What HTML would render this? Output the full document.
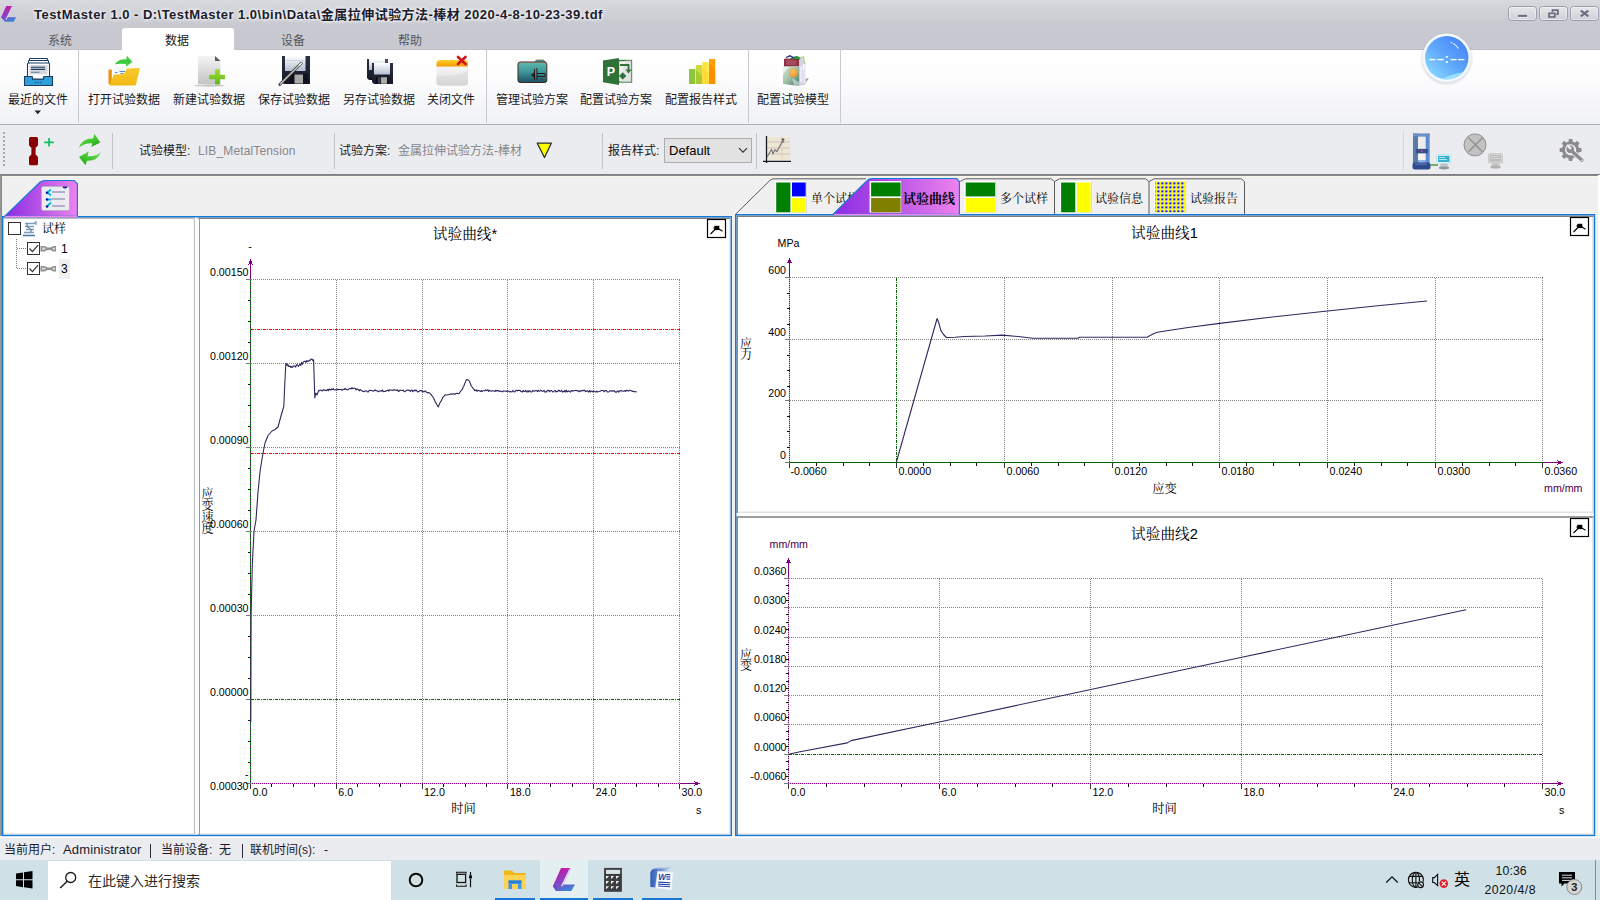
<!DOCTYPE html>
<html lang="zh-CN">
<head>
<meta charset="utf-8">
<title>TestMaster 1.0</title>
<style>
*{box-sizing:border-box;margin:0;padding:0}
html,body{width:1600px;height:900px;overflow:hidden;background:#fff}
body{position:relative;font-family:"Liberation Sans","Noto Sans CJK SC",sans-serif;font-size:12px;color:#1a1a1a;line-height:1}
.abs{position:absolute}
.t{position:absolute;white-space:nowrap;line-height:1}
svg{position:absolute;overflow:visible}
/* title bar */
#titlebar{left:0;top:0;width:1600px;height:50px;background:linear-gradient(#d8d9de 0px,#d0d1d7 12px,#c9cad1 24px,#c7c8d0 49px,#b9bac3 50px)}
#title{left:34px;top:7.5px;font-size:13px;font-weight:bold;color:#1b1b2b;letter-spacing:0.47px;text-shadow:0 0 3px #fff,0 0 5px #fff}
.wbtn{position:absolute;top:6px;width:28.500px;height:15px;border:1px solid #9b9dab;border-radius:3.500px;background:linear-gradient(#e6e7eb,#dadbe0 50%,#d0d1d8);box-shadow:inset 0 0 0 1px rgba(255,255,255,.45)}
.mtab{position:absolute;top:35px;font-size:12px;color:#55565c;width:60px;text-align:center;margin-left:-30px}
#acttab{left:122px;top:28px;width:112px;height:23px;background:#fff;border-radius:3px 3px 0 0}
/* ribbon */
#ribbon{left:0;top:50px;width:1600px;height:74px;background:linear-gradient(#ffffff 0,#fdfdfe 26px,#f0f1f5 74px)}
#ribbonline{left:0;top:123.500px;width:1600px;height:1.500px;background:linear-gradient(#c9cad0,#aeafb6 50%,#d2d3d8)}
.rsep{position:absolute;top:50px;width:1px;height:73px;background:#c9cad0}
.rlabel{position:absolute;top:94px;font-size:12px;color:#1a1a1a;white-space:nowrap;text-align:center;width:80px;margin-left:-40px;line-height:13px}
/* toolbar */
#toolbar{left:0;top:125px;width:1600px;height:49px;background:#ebecf0}
.tsep{position:absolute;top:133px;width:1px;height:36px;background:#c3c4c9}
.tl{position:absolute;top:145px;font-size:12px;white-space:nowrap;line-height:13px}
.grey{color:#85868a}
/* doc area */
#docarea{left:0;top:174px;width:1600px;height:664px;background:#f0f0f0}
/* status */
#status{left:0;top:838px;width:1600px;height:22px;background:#ebecf0}
#taskbar{left:0;top:860px;width:1600px;height:40px;background:#cfe1e7}
.sf{font-family:"Liberation Sans","Noto Serif CJK SC",serif}
.ct{font-family:"Liberation Sans","Noto Sans CJK SC",sans-serif}
</style>
</head>
<body>
<!-- ===== TITLE BAR ===== -->
<div id="titlebar" class="abs"></div>
<svg style="left:0;top:0" width="20" height="28" viewBox="0 0 20 28">
  <defs><linearGradient id="lg1" x1="0.300" y1="0" x2="0.700" y2="1"><stop offset="0" stop-color="#c6189f"/><stop offset="0.500" stop-color="#8e40c4"/><stop offset="1" stop-color="#3488da"/></linearGradient></defs>
  <path d="M6.250 6 L12.750 6 L7.400 17.250 L16 17.250 L13.750 21.750 L5 21.750 L1 17.500 Z" fill="url(#lg1)"/>
  <path d="M11.900 6.300 L12.800 6.300 L6.400 20 L5.600 19.500 Z" fill="#f6ecf9" opacity=".9"/>
</svg>
<div id="title" class="t">TestMaster 1.0 - D:\TestMaster 1.0\bin\Data\金属拉伸试验方法-棒材 2020-4-8-10-23-39.tdf</div>
<div class="wbtn" style="left:1508px"></div>
<div class="wbtn" style="left:1539.200px"></div>
<div class="wbtn" style="left:1570.200px"></div>
<svg style="left:1500px;top:0" width="100" height="28" viewBox="1500 0 100 28">
  <g fill="none" stroke="#f2f3f6" stroke-width="1.800" opacity=".8" transform="translate(0 1.100)">
    <path d="M1518 15.900H1527"/><path d="M1580.800 10.800 L1588.300 16.200 M1588.300 10.800 L1580.800 16.200"/>
  </g>
  <rect x="1518" y="14.900" width="9" height="2" fill="#6a6c80"/>
  <path d="M1552.500 12 V10.100 H1557.900 V14.200 H1556.200" fill="none" stroke="#6a6c80" stroke-width="1.700"/>
  <rect x="1549" y="13.300" width="5.800" height="3.700" fill="none" stroke="#6a6c80" stroke-width="1.700"/>
  <path d="M1580.800 10.600 L1588.300 16.400 M1588.300 10.600 L1580.800 16.400" stroke="#6a6c80" stroke-width="2.300" fill="none"/>
</svg>
<!-- menu tabs -->
<div id="acttab" class="abs"></div>
<div class="mtab" style="left:60px">系统</div>
<div class="mtab" style="left:177px;color:#1a1a1a">数据</div>
<div class="mtab" style="left:293px">设备</div>
<div class="mtab" style="left:410px">帮助</div>
<!-- ===== RIBBON ===== -->
<div id="ribbon" class="abs"></div>
<div id="ribbonline" class="abs"></div>
<div class="rsep" style="left:78px"></div>
<div class="rsep" style="left:486px"></div>
<div class="rsep" style="left:748px"></div>
<div class="rsep" style="left:840px"></div>
<div class="rlabel" style="left:38px">最近的文件</div>
<div class="rlabel" style="left:124px">打开试验数据</div>
<div class="rlabel" style="left:209px">新建试验数据</div>
<div class="rlabel" style="left:294px">保存试验数据</div>
<div class="rlabel" style="left:379px">另存试验数据</div>
<div class="rlabel" style="left:451px">关闭文件</div>
<div class="rlabel" style="left:532px">管理试验方案</div>
<div class="rlabel" style="left:616px">配置试验方案</div>
<div class="rlabel" style="left:701px">配置报告样式</div>
<div class="rlabel" style="left:793px">配置试验模型</div>
<svg style="left:34px;top:110px" width="8" height="5" viewBox="0 0 8 5"><path d="M0.500 0.500h6.500l-3.250 3.800z" fill="#222"/></svg>
<!-- ribbon icons: one big svg in page coordinates -->
<svg style="left:0;top:50px" width="860" height="45" viewBox="0 50 860 45">
  <defs>
    <linearGradient id="gdoc" x1="0" y1="0" x2="0" y2="1"><stop offset="0" stop-color="#f4f4f4"/><stop offset="1" stop-color="#c4c4c4"/></linearGradient>
    <linearGradient id="gplus" x1="0" y1="0" x2="0" y2="1"><stop offset="0" stop-color="#9be02e"/><stop offset="1" stop-color="#62b515"/></linearGradient>
    <linearGradient id="gfold" x1="0" y1="0" x2="0" y2="1"><stop offset="0" stop-color="#f7cb2a"/><stop offset="1" stop-color="#f1b816"/></linearGradient>
    <linearGradient id="glabel" x1="0" y1="0" x2="0" y2="1"><stop offset="0" stop-color="#ffffff"/><stop offset="1" stop-color="#b4bfd2"/></linearGradient>
    <linearGradient id="gnavy" x1="0" y1="0" x2="0" y2="1"><stop offset="0" stop-color="#2b3145"/><stop offset="1" stop-color="#151824"/></linearGradient>
    <linearGradient id="gwin" x1="0" y1="0" x2="0" y2="1"><stop offset="0" stop-color="#fbfbfb"/><stop offset="0.55" stop-color="#ededed"/><stop offset="1" stop-color="#cfcfcf"/></linearGradient>
    <linearGradient id="gorg" x1="0" y1="0" x2="0" y2="1"><stop offset="0" stop-color="#ffd02a"/><stop offset="1" stop-color="#f39a00"/></linearGradient>
    <linearGradient id="gteal" x1="0" y1="0" x2="0" y2="1"><stop offset="0" stop-color="#5fbab0"/><stop offset="0.45" stop-color="#3f9a9a"/><stop offset="1" stop-color="#1c4f68"/></linearGradient>
    <linearGradient id="gbag" x1="0" y1="0" x2="1" y2="1"><stop offset="0" stop-color="#d6e6d6"/><stop offset="0.5" stop-color="#9fc0a6"/><stop offset="1" stop-color="#3f7458"/></linearGradient>
    <linearGradient id="gside" x1="0" y1="0" x2="1" y2="0"><stop offset="0" stop-color="#c9c7e6"/><stop offset="1" stop-color="#f4f4fb"/></linearGradient>
    <radialGradient id="gball" cx="0.4" cy="0.35" r="0.7"><stop offset="0" stop-color="#f9c062"/><stop offset="1" stop-color="#ea952a"/></radialGradient>
  </defs>

  <!-- 1 recent files -->
  <g>
    <path d="M29.500 63 L29.500 58.500 L47.500 58.500 L47.500 63" fill="#fff" stroke="#1d3c63" stroke-width="1"/>
    <path d="M28.500 65 L28.500 60.500 L48.500 60.500 L48.500 65" fill="#fff" stroke="#1d3c63" stroke-width="1"/>
    <path d="M27.500 78 L27.500 64 Q27.500 63 28.500 63 L48.500 63 Q49.500 63 49.500 64 L49.500 78Z" fill="#fff" stroke="#1d3c63" stroke-width="1.100"/>
    <rect x="29.500" y="65" width="18" height="9.500" fill="#d3d8de"/>
    <path d="M31 67.300h14M31 69.400h14" stroke="#1d3c63" stroke-width="1.100"/>
    <path d="M31 72.300h8.500" stroke="#6f87a3" stroke-width="1.100"/>
    <path d="M24.500 76.500 L32.500 76.500 L32.500 79 L43.500 79 L43.500 76.500 L52.500 76.500 L52.500 85.500 L24.500 85.500Z" fill="#2f9fda" stroke="#1d3c63" stroke-width="1.100"/>
    <rect x="32.500" y="74.500" width="11" height="4.500" fill="#fff"/>
    <path d="M32.500 76.500V79H43.500V76.500" fill="none" stroke="#1d3c63" stroke-width="1.100"/>
    <path d="M35 82.500h1.200M37.600 82.500h1.200M40.200 82.500h1.200" stroke="#1d3c63" stroke-width="1"/>
  </g>

  <!-- 2 open folder -->
  <g>
    <path d="M108.500 70.500 Q108.500 69.500 109.500 69.500 L111.800 69.500 L111.800 84 L108.500 84Z" fill="#e8930c"/>
    <path d="M113.500 67.500 L127 66.500 L129 74.500 L114.500 76Z" fill="#f4f7fb"/>
    <path d="M115 72.500h2.500M119.500 71.500h6M120.500 73.500h3" stroke="#4a90d9" stroke-width="1"/>
    <path d="M114 74.500 L123.500 74.200 L127 68.400 L139 68 Q140 68 139.800 69 L136 84.500 Q135.700 85.500 134.700 85.500 L110.300 85.500 Q109 85.500 109.500 84.300Z" fill="url(#gfold)"/>
    <path d="M114.800 64.300 Q118 58.800 126.300 59.200 L126.800 55.800 L132.400 61.800 L125.800 66.800 L126.200 63.900 Q119.500 63.200 114.800 64.300Z" fill="#3ecb3e"/>
  </g>

  <!-- 3 new doc -->
  <g>
    <ellipse cx="209.500" cy="85.500" rx="15.500" ry="1.200" fill="#9a9a9a" opacity=".55"/>
    <path d="M198 56 L215 56 L220.500 61 L220.500 84 L198 84Z" fill="url(#gdoc)"/>
    <path d="M215 56 L220.500 61 L215 61Z" fill="#5a5a5a"/>
    <path d="M215 69.800 Q215 69.300 215.500 69.300 L219.300 69.300 Q219.800 69.300 219.800 69.800 L219.800 74.800 L224.500 74.800 Q225 74.800 225 75.300 L225 78.700 Q225 79.200 224.500 79.200 L219.800 79.200 L219.800 84 Q219.800 84.500 219.300 84.500 L215.500 84.500 Q215 84.500 215 84 L215 79.200 L209.700 79.200 Q209.200 79.200 209.200 78.700 L209.200 75.300 Q209.200 74.800 209.700 74.800 L215 74.800Z" fill="url(#gplus)"/>
  </g>

  <!-- 4 save -->
  <g>
    <path d="M282 56 L310 56 L310 84 L284 84 L282 82Z" fill="url(#gnavy)"/>
    <rect x="285" y="56" width="20.500" height="15" fill="url(#glabel)"/>
    <path d="M286 60.500h18.500" stroke="#c2cde0" stroke-width=".8"/>
    <rect x="290" y="74" width="18" height="10" fill="#10131d"/>
    <rect x="294.500" y="74.500" width="8.500" height="9" fill="#a9a9a9"/>
    <path d="M279.800 84.500 L301.200 63.200" stroke="#3c3c3c" stroke-width="2.800" stroke-linecap="round"/>
    <path d="M280.300 84 L300.300 64.200" stroke="#c4c4c4" stroke-width="1.400" stroke-linecap="round"/>
    <path d="M299 65.500 L301.800 62.800" stroke="#f5f5f5" stroke-width="1.500"/>
  </g>

  <!-- 5 save as -->
  <g>
    <path d="M367 59 L388 59 L388 80 L369 80 L367 78Z" fill="url(#gnavy)"/>
    <rect x="369" y="59" width="16" height="11" fill="url(#glabel)"/>
    <rect x="385.200" y="59.300" width="2.500" height="3.500" fill="#555b6e"/>
    <path d="M372 63 L393 63 L393 84 L374 84 L372 82Z" fill="url(#gnavy)"/>
    <rect x="374" y="63" width="16" height="11.500" fill="url(#glabel)"/>
    <rect x="376.200" y="76.800" width="11.600" height="7.200" fill="#0d1019"/>
    <rect x="381" y="77.200" width="6" height="6.500" fill="#a9a9a9"/>
    <rect x="378" y="77.200" width="2.400" height="6.500" fill="#3d4152"/>
  </g>

  <!-- 6 close file -->
  <g>
    <rect x="436.500" y="60" width="31.500" height="25.500" rx="3.500" fill="url(#gwin)"/>
    <path d="M436.500 66.500 L436.500 63.500 Q436.500 60 440 60 L464.500 60 Q468 60 468 63.500 L468 66.500Z" fill="url(#gorg)"/>
    <path d="M437 76 Q455 76.500 468 71 L468 82 Q468 85.500 464.500 85.500 L440 85.500 Q436.500 85.500 436.500 82Z" fill="#d9d9d9" opacity=".55"/>
    <path d="M458 57 L465.500 64 M465.500 57 L458 64" stroke="#d0111b" stroke-width="2.600" stroke-linecap="round"/>
  </g>

  <!-- 7 manage -->
  <g>
    <path d="M535 62.500 L535.800 60.600 Q536 60 536.800 60 L543 60 Q543.700 60 544.200 60.600 L546 62.800Z" fill="#4fb0ad" stroke="#5a3a2a" stroke-width=".6"/>
    <rect x="518" y="62" width="28.800" height="20.500" rx="2.200" fill="url(#gteal)" stroke="#3d281d" stroke-width="1"/>
    <path d="M518.500 64.500 Q518.500 62.500 520.500 62.500 L544.500 62.500 Q546.500 62.500 546.500 64.500" fill="none" stroke="#8a6a55" stroke-width="1"/>
    <g stroke="#2a1a14" stroke-width="1" fill="none">
      <path d="M534.500 69v11M537 70v10M537 73.500h8v3h-8"/>
      <path d="M531.500 75l3-2.500v5z" fill="#2a1a14"/>
      <path d="M536 68l1.500 2M541 78.500l1.500 1.500"/>
    </g>
  </g>

  <!-- 8 config plan (project) -->
  <g>
    <rect x="618.500" y="60.500" width="13" height="21.500" fill="#f1f1f1" stroke="#2e7237" stroke-width="1.300"/>
    <path d="M625.500 60.500 L631.500 60.500 L631.500 82 L620 82Z" fill="#dcdcdc" opacity=".7"/>
    <path d="M620 65 L628.500 65 L628.500 70" fill="none" stroke="#2e7237" stroke-width="1.800"/>
    <path d="M625.500 69.500 L631.500 69.500 L628.500 73.500Z" fill="#2e7237"/>
    <path d="M622.700 72.200 L626.400 75.900 L622.700 79.600 L619 75.900Z" fill="#2e7237"/>
    <path d="M603 60.500 L619 58 L619 85 L603 82.200Z" fill="#2e7237"/>
    <text x="611" y="76" text-anchor="middle" font-family="Liberation Sans,sans-serif" font-weight="bold" font-size="12.500" fill="#ffffff">P</text>
  </g>

  <!-- 9 report style bars -->
  <g>
    <rect x="689" y="69" width="6.200" height="15" rx=".6" fill="#8cc63f"/>
    <rect x="695.800" y="65" width="6.400" height="19" rx=".6" fill="#cbdb3c"/>
    <path d="M695.800 70 L702.200 76 L702.200 84 L695.800 84Z" fill="#a3c332" opacity=".8"/>
    <rect x="702.300" y="62" width="6.400" height="22" rx=".6" fill="#ffe53b"/>
    <path d="M702.300 67 L708.700 73 L708.700 84 L702.300 84Z" fill="#fdd835" opacity=".8"/>
    <rect x="709" y="59" width="6.200" height="25" rx=".6" fill="#ffa000"/>
    <path d="M709 63.500 L715.200 69.500 L715.200 84 L709 84Z" fill="#fb8c00" opacity=".8"/>
  </g>

  <!-- 10 config model (bag) -->
  <g>
    <rect x="778.500" y="56" width="31" height="30.500" fill="#ffffff"/>
    <path d="M803 79 L809 78 L804.500 84.500 L800 85.500Z" fill="#8d8d8d" opacity=".8"/>
    <path d="M799 67 L804.500 60.500 L806.500 62 L805.500 83 L799 86Z" fill="url(#gside)"/>
    <path d="M801 66v16M803.500 64v5" stroke="#fff" stroke-width="1.200" opacity=".9"/>
    <path d="M790 58.500 L793 56.800 L797 56 L800.500 57.500 L800.500 66 L790 66Z" fill="#2f8f3a"/>
    <path d="M799 60 L802 57.800 L803.500 60 L803 66 L799 67Z" fill="#d5d3ea"/>
    <path d="M786 57.500 L790 55.800 L794 58" fill="none" stroke="#1d2a8a" stroke-width="1.300"/>
    <path d="M799.500 58 L803.500 57 L804.500 64" fill="none" stroke="#b9d09a" stroke-width="1.500"/>
    <path d="M784 59.500 Q784 58.500 785.500 58.500 L797.500 59 Q799 59 799 60.500 L799 66.500 L784 66.500Z" fill="#8e2f42"/>
    <path d="M786 60 L796.500 60.300 L796.500 65 L786 65Z" fill="#b0566a" opacity=".7"/>
    <path d="M783 66.500 L799 66.500 L799 86 L783 84Z" fill="url(#gbag)"/>
    <path d="M783 67 L789 67 L783 74Z" fill="#f2f6f2" opacity=".8"/>
    <circle cx="793.500" cy="72.800" r="4.400" fill="url(#gball)"/>
    <path d="M792 78 L799 82 L799 86 L794 85.400Z" fill="#e4e4f2" opacity=".6"/>
  </g>
</svg>

<!-- blue clock circle -->
<svg style="left:1421px;top:32px" width="52" height="54" viewBox="0 0 52 54">
  <defs><linearGradient id="clk" x1="0.880" y1="0.150" x2="0.150" y2="0.880"><stop offset="0" stop-color="#4687f7"/><stop offset="0.500" stop-color="#5ea6fb"/><stop offset="1" stop-color="#84d3ff"/></linearGradient>
  <radialGradient id="clks" cx="0.5" cy="0.5" r="0.5"><stop offset="0.860" stop-color="#9aa3b5" stop-opacity=".35"/><stop offset="1" stop-color="#9aa3b5" stop-opacity="0"/></radialGradient>
  <clipPath id="clkc"><circle cx="25.800" cy="25.800" r="21.700"/></clipPath></defs>
  <circle cx="25.800" cy="27" r="27" fill="url(#clks)"/>
  <circle cx="25.800" cy="25.800" r="24.300" fill="#f4f9fd"/>
  <circle cx="25.800" cy="25.800" r="21.700" fill="url(#clk)"/>
  <path d="M18 49 Q30 41 46 40 L46 52 L18 52Z" fill="#a4e6ff" opacity=".85" clip-path="url(#clkc)"/>
  <path d="M30.200 10.300 L31 11 M32.500 11.800 Q35.500 13.500 37.300 16.200" stroke="#e3f2ff" stroke-width="1.100" fill="none" stroke-linecap="round"/>
  <text x="26.400" y="30.900" text-anchor="middle" font-family="Liberation Sans,sans-serif" font-weight="bold" font-size="12" fill="#ffffff" letter-spacing="1.2">––:––</text>
</svg>
<!-- ===== TOOLBAR ===== -->
<div id="toolbar" class="abs"></div>
<svg style="left:3px;top:132px" width="3" height="36" viewBox="0 0 3 36" shape-rendering="crispEdges"><path d="M1 0v35" stroke="#a6a7ab" stroke-width="2" stroke-dasharray="2 2"/></svg>
<!-- specimen + -->
<svg style="left:28px;top:136px" width="28" height="30" viewBox="28 136 28 30">
  <path d="M29 138.500 Q29 137 30.500 137 L36.500 137 Q38 137 38 138.500 L38 144.500 Q38 145.500 37.200 146.200 L35.600 147.800 L35.600 154.400 L37.200 156 Q38 156.700 38 157.700 L38 163.700 Q38 165.200 36.500 165.200 L30.500 165.200 Q29 165.200 29 163.700 L29 157.700 Q29 156.700 29.800 156 L31.400 154.400 L31.400 147.800 L29.800 146.200 Q29 145.500 29 144.500Z" fill="#8b0000"/>
  <path d="M49 138v8.600M44.200 142.300h9.600" stroke="#0fc062" stroke-width="1.700" fill="none"/>
</svg>
<!-- refresh -->
<svg style="left:76px;top:130px" width="28" height="38" viewBox="76 130 28 38">
  <defs><linearGradient id="gr1" x1="0" y1="0" x2="1" y2="1"><stop offset="0" stop-color="#6fe052"/><stop offset="0.600" stop-color="#3cc42a"/><stop offset="1" stop-color="#1f8f16"/></linearGradient>
  <linearGradient id="gr2" x1="1" y1="0" x2="0" y2="1"><stop offset="0" stop-color="#6fe052"/><stop offset="0.600" stop-color="#3cc42a"/><stop offset="1" stop-color="#239a1a"/></linearGradient></defs>
  <path d="M79 147.600 Q82.500 138.300 93 138.600 L94.500 134 L100.300 142.400 L91.300 147 L92.300 143.200 Q84.500 142.800 79 147.600Z" fill="url(#gr1)"/>
  <path d="M101 152 Q97.500 161.200 87 160.800 L85.500 165.200 L79 157 L88.600 151.600 L87.600 156.200 Q95.500 157 101 152Z" fill="url(#gr2)"/>
</svg>
<div class="tsep" style="left:112px"></div>
<div class="tl" style="left:139px">试验模型:</div>
<div class="tl grey" style="left:198px;letter-spacing:0.14px">LIB_MetalTension</div>
<div class="tsep" style="left:334px"></div>
<div class="tl" style="left:339px">试验方案:</div>
<div class="tl grey" style="left:398px">金属拉伸试验方法-棒材</div>
<svg style="left:536px;top:142px" width="17" height="17" viewBox="0 0 17 17"><path d="M1.300 1.200 L15.300 1.200 L8.500 15.500Z" fill="#ffff00" stroke="#2b2b2b" stroke-width="1.300" stroke-linejoin="round"/></svg>
<div class="tsep" style="left:602px"></div>
<div class="tl" style="left:608px">报告样式:</div>
<div class="abs" style="left:664px;top:138px;width:88px;height:25px;background:#e2e2e3;border:1px solid #adadad"></div>
<div class="t" style="left:669px;top:144px;font-size:13px;color:#000">Default</div>
<svg style="left:738px;top:147px" width="10" height="7" viewBox="0 0 10 7"><path d="M1 1.200l4 4 4-4" stroke="#333" stroke-width="1.200" fill="none"/></svg>
<div class="tsep" style="left:756px"></div>
<!-- chart icon -->
<svg style="left:763px;top:136px" width="29" height="27" viewBox="0 0 29 27">
  <rect x="3" y="1" width="24" height="23" fill="#ede8d6"/>
  <path d="M3 6h24M3 12h24M3 18h24" stroke="#dccbc4" stroke-width="1.300"/>
  <path d="M19 1v22" stroke="#e3d3c4" stroke-width="1.500"/>
  <path d="M3.500 0v27M0 25.300h28" stroke="#1a1a1a" stroke-width="1.300" fill="none"/>
  <path d="M4 21 L8.500 13.500 L10 17.500 L12 14 L14 15.500 L19.500 5 L21 6.500" stroke="#777" stroke-width="1.200" fill="none"/>
  <path d="M18.500 3.500h3M20 2v3.500" stroke="#555" stroke-width="1"/>
</svg>
<div class="tsep" style="left:1403px;top:131px;height:40px;background:#d6d7db"></div>
<svg style="left:1400px;top:128px" width="200" height="46" viewBox="1400 128 200 46">
  <!-- testing machine -->
  <g>
    <rect x="1413" y="133.600" width="16.500" height="30" fill="#8fb4e6"/>
    <rect x="1413" y="133.600" width="5" height="30" fill="#5a78a8"/>
    <rect x="1425.500" y="133.600" width="4" height="30" fill="#5d8bd0"/>
    <rect x="1413" y="133.600" width="16.500" height="2.800" fill="#6f8fc0"/>
    <rect x="1418" y="136.800" width="7.600" height="11.800" fill="#ececec"/>
    <rect x="1416" y="149" width="12" height="4.300" fill="#3a4f86"/>
    <rect x="1420.500" y="150" width="2.500" height="2" fill="#7a4fa0"/>
    <rect x="1418" y="153.600" width="7.600" height="6.400" fill="#f2f2f2"/>
    <rect x="1412.500" y="162.400" width="18" height="7" rx="2.500" fill="#2c4a8c"/>
    <rect x="1415" y="163.200" width="12" height="2" fill="#4a6ab0"/>
    <path d="M1430.500 165H1438" stroke="#2a8a2a" stroke-width="1.300"/>
    <rect x="1436.500" y="154.300" width="14.500" height="9.300" rx="1" fill="#e9f6fb" stroke="#b7dfea" stroke-width=".8"/>
    <rect x="1438" y="155.800" width="11.500" height="6.200" fill="#35b0d0"/>
    <path d="M1439 157.500h6M1439 159.500h8" stroke="#bfeaf5" stroke-width=".9"/>
    <path d="M1441 163.600h6l1.500 3h-9z" fill="#b9c3c9"/>
    <ellipse cx="1444" cy="167.800" rx="5.200" ry="1.600" fill="#8d979d"/>
  </g>
  <!-- grey X -->
  <circle cx="1475" cy="144.900" r="11" fill="#c2c2c2" stroke="#8f8f8f" stroke-width="1"/>
  <path d="M1468.500 137.800 L1482.500 151.800 M1482.500 137.800 L1468.500 151.800" stroke="#8f8f8f" stroke-width="1.300"/>
  <!-- grey computer -->
  <g>
    <rect x="1488.500" y="153.600" width="14" height="9.400" rx="1" fill="#d6d6d6" stroke="#c4c4c4" stroke-width=".8"/>
    <rect x="1490" y="155" width="11" height="6.500" fill="#bdbdbd"/>
    <path d="M1491 156.500h7M1491 158.500h9" stroke="#d9d9d9" stroke-width=".9"/>
    <path d="M1492.500 163h6l1.500 3h-9z" fill="#c6c6c6"/>
    <ellipse cx="1495.500" cy="167" rx="5.200" ry="1.500" fill="#b0b0b0"/>
  </g>
  <!-- gear + wrench -->
  <g>
    <g fill="#8b8b8b">
      <circle cx="1570.600" cy="149.900" r="8.600"/>
      <g>
        <rect x="1568.600" y="138.900" width="4" height="22" rx=".8"/>
        <rect x="1568.600" y="138.900" width="4" height="22" rx=".8" transform="rotate(45 1570.600 149.900)"/>
        <rect x="1568.600" y="138.900" width="4" height="22" rx=".8" transform="rotate(90 1570.600 149.900)"/>
        <rect x="1568.600" y="138.900" width="4" height="22" rx=".8" transform="rotate(135 1570.600 149.900)"/>
      </g>
    </g>
    <circle cx="1570.600" cy="149.900" r="5.600" fill="#ebecf0"/>
    <path d="M1571 150.300 L1582.300 160.600" stroke="#ebecf0" stroke-width="5.200" stroke-linecap="round"/>
    <path d="M1571.500 150.800 L1582 160.300" stroke="#8b8b8b" stroke-width="3.200" stroke-linecap="round"/>
    <circle cx="1570.200" cy="149.300" r="3.700" fill="#8b8b8b"/>
    <path d="M1567 144.800 L1571 148.800" stroke="#ebecf0" stroke-width="2.600"/>
    <circle cx="1582" cy="160.400" r=".8" fill="#ebecf0"/>
  </g>
</svg>

<!-- ===== DOC AREA ===== -->
<div id="docarea" class="abs"></div>
<div class="abs" style="left:0;top:173.500px;width:1600px;height:2.500px;background:linear-gradient(#8f8f93,#6f6f73 55%,#a9a9ac)"></div>
<div class="abs" style="left:0;top:176px;width:1600px;height:1px;background:#fbf7e4"></div>
<div class="abs" style="left:0;top:176px;width:2px;height:661px;background:linear-gradient(90deg,#a3a3a3,#7d7d7d)"></div>
<div class="abs" style="left:1598px;top:175px;width:2px;height:663px;background:#fff"></div>
<div class="abs" style="left:0;top:836px;width:1600px;height:2px;background:#fff"></div>
<!-- frames -->
<div class="abs" style="left:3px;top:217px;width:192px;height:618px;background:#fff"></div>
<div class="abs" style="left:198px;top:217px;width:533px;height:618px;background:#fff"></div>
<div class="abs" style="left:736px;top:215px;width:858px;height:620px;background:#fff"></div>
<svg style="left:0;top:0" width="1600" height="900" viewBox="0 0 1600 900">
  <!-- sunken grey borders -->
  <g fill="none" stroke="#7f7f7f" stroke-width="1.500">
    <path d="M3.400 218 H194.300" stroke-width="1.200"/>
    <path d="M199.050 835 V218.150 H730"/>
    <path d="M737.150 513 V216.150 H1593.500"/>
    <path d="M737.150 835 V516.900 H1593.500"/>
  </g>
  <g fill="none" stroke="#e2e2e2" stroke-width="1.500">
    <path d="M3.400 834 H193.600"/><path d="M194.400 218.600 V834.600" stroke="#b0b0b0" stroke-width="0.900"/>
    <path d="M199.800 834 H729.900 V219"/>
    <path d="M738 512.200 H1593 V217"/>
    <path d="M738 834 H1593 V517.700"/>
  </g>
  <!-- blue frames -->
  <rect x="2.700" y="216.700" width="728.600" height="618.800" fill="none" stroke="#1479d7" stroke-width="1.400"/>
  <rect x="735.700" y="214.700" width="858.800" height="620.800" fill="none" stroke="#1479d7" stroke-width="1.400"/>
</svg>
<div class="abs" style="left:194.800px;top:218.800px;width:3.800px;height:615.500px;background:#fcfcfc"></div>

<!-- left tab (tree) -->
<svg style="left:0;top:176px" width="200" height="42" viewBox="0 0 200 42">
  <defs><linearGradient id="tabg" x1="0" y1="0" x2="1" y2="0"><stop offset="0" stop-color="#8a2be2"/><stop offset="0.450" stop-color="#b452e6"/><stop offset="1" stop-color="#ee82ee"/></linearGradient></defs>
  <path d="M4.500 40.400 L40 6.300 Q42 4.500 45 4.500 L74 4.500 L77.400 7.800 L77.400 40.400 Z" fill="url(#tabg)" stroke="#1479d7" stroke-width="1.200"/>
  <rect x="5.300" y="39.900" width="72.100" height="1.400" fill="#ee82ee"/>
  <rect x="41.500" y="10.500" width="28" height="24" rx="2" fill="#ebebf1" stroke="#b9b0c4" stroke-width="1"/>
  <path d="M52 16h13M52 23h13M52 30h13" stroke="#9d9db8" stroke-width="1.500"/>
  <path d="M51 13.500l-3.500 3 3.500 3M47.500 23.500h4M51 26.500l-3.500 3.500" stroke="#00b7e8" stroke-width="1.800" fill="none"/>
  <circle cx="47" cy="16.800" r="1.300" fill="#1111aa"/><circle cx="47" cy="23.500" r="1.300" fill="#1111aa"/><circle cx="47" cy="30.500" r="1.300" fill="#1111aa"/>
  <path d="M62.500 10.500h5a2.500 2 0 0 1-5 0z" fill="#1a1a9a"/>
</svg>

<!-- tree -->
<svg style="left:0;top:218px" width="195" height="70" viewBox="0 0 195 70">
  <rect x="8.500" y="4.500" width="12" height="12" fill="#fff" stroke="#333" stroke-width="1"/>
  <g shape-rendering="crispEdges" stroke="#7a7a7a" stroke-width="1" stroke-dasharray="1 1" fill="none"><path d="M16.500 21v30"/><path d="M17 30.500h10"/><path d="M17 50.500h10"/></g>
  <rect x="27.500" y="24.500" width="12" height="12" fill="#fff" stroke="#333" stroke-width="1"/>
  <rect x="27.500" y="44.500" width="12" height="12" fill="#fff" stroke="#333" stroke-width="1"/>
  <path d="M29.500 30.500l3 3.200 5.500-6.500" stroke="#333" stroke-width="1.200" fill="none"/>
  <path d="M29.500 50.500l3 3.200 5.500-6.500" stroke="#333" stroke-width="1.200" fill="none"/>
  <!-- root icon -->
  <g>
    <path d="M25 5.500h9l2-1.500v3M25 8.500h9M26 11.500h8M24 14.500h10" stroke="#7f9fb8" stroke-width="1.400" fill="none"/>
    <path d="M27 5v3.500l4 3v3" stroke="#5b86a6" stroke-width="1.200" fill="none"/>
    <path d="M23 17.500h12" stroke="#4e7da6" stroke-width="1.600"/>
  </g>
  <!-- specimen icons -->
  <g fill="#8f8f8f">
    <path d="M40.500 28h4l3 1.500h3l3-1.500h2.500v5.500h-2.500l-3-1.500h-3l-3 1.500h-4z"/>
    <path d="M40.500 48h4l3 1.500h3l3-1.500h2.500v5.500h-2.500l-3-1.500h-3l-3 1.500h-4z"/>
  </g>
  <g fill="#d6d6d6"><path d="M42 29.500h2.500l1.500 1-1.500 1.300H42zM52 30.500l2-1h1v2.500h-1z"/><path d="M42 49.500h2.500l1.500 1-1.500 1.300H42zM52 50.500l2-1h1v2.500h-1z"/></g>
</svg>
<div class="abs" style="left:59px;top:259px;width:11px;height:20px;background:#f0f0f0"></div>
<div class="t sf" style="left:42px;top:222px;font-size:12px;line-height:14px;color:#000">试样</div>
<div class="t" style="left:61px;top:242px;font-size:12px;line-height:14px;color:#000">1</div>
<div class="t" style="left:61px;top:262px;font-size:12px;line-height:14px;color:#000">3</div>
<!-- ===== RIGHT TABS ===== -->
<div class="t sf" style="left:811px;top:192px;font-size:12px;line-height:14px;color:#000">单个试样</div>
<svg style="left:730px;top:176px" width="520" height="42" viewBox="0 0 520 42">
  <defs>
    <pattern id="dots" x="426.400" y="5.400" width="4" height="4" patternUnits="userSpaceOnUse"><rect x="1.100" y="0" width="1.800" height="4" fill="#ffffff" opacity=".9"/><circle cx="2" cy="2" r="1.150" fill="#0000ff"/></pattern>
  </defs>
  <!-- tab 1 outline (inactive) -->
  <path d="M5.500 38.300 L40 4.300 Q41.800 2.800 44 2.800 L136 2.800" fill="none" stroke="#5c5c5c" stroke-width="1"/>
  <!-- inactive tabs 3..5 -->
  <path d="M230.300 5.400 L235.300 2.800 L321.300 2.800 L324.500 5.600 L324.500 38" fill="none" stroke="#5c5c5c" stroke-width="1"/>
  <path d="M324.500 5.600 L329.500 2.800 L415.800 2.800 L419 5.600 L419 38" fill="none" stroke="#5c5c5c" stroke-width="1"/>
  <path d="M419 5.600 L424 2.800 L511.300 2.800 L514.500 5.600 L514.500 38" fill="none" stroke="#5c5c5c" stroke-width="1"/>
  <rect x="45.0" y="5.500" width="31.800" height="31.400" fill="#b9b9b9" opacity=".55"/>
  <rect x="44.7" y="5.100" width="31.400" height="31.300" fill="#ffffff"/>
  <rect x="46.2" y="6.500" width="14.200" height="29.700" fill="#008000"/>
  <rect x="62.0" y="6.500" width="13.700" height="13.900" fill="#0000ff"/>
  <rect x="62.0" y="22" width="13.700" height="14.200" fill="#ffff00"/>
  <!-- active tab -->
  <path d="M103 38.400 L137 4.600 Q139 2.500 142 2.500 L226.500 2.500 L229.400 5.500 L229.400 38.400 Z" fill="url(#tabg)" stroke="#1479d7" stroke-width="1.200"/>
  <rect x="104" y="37.900" width="125.400" height="1.300" fill="#ee82ee"/>
  <rect x="139.9" y="5.500" width="31.800" height="31.400" fill="#b9b9b9" opacity=".55"/>
  <rect x="139.6" y="5.100" width="31.400" height="31.300" fill="#ffffff"/>
  <rect x="141.1" y="6.500" width="29.5" height="13.900" fill="#008000"/>
  <rect x="141.1" y="22" width="29.5" height="14.200" fill="#808000"/>
  <rect x="234.5" y="5.500" width="31.800" height="31.400" fill="#b9b9b9" opacity=".55"/>
  <rect x="234.2" y="5.100" width="31.400" height="31.300" fill="#ffffff"/>
  <rect x="235.7" y="6.500" width="29.5" height="13.900" fill="#008000"/>
  <rect x="235.7" y="22" width="29.5" height="14.200" fill="#ffff00"/>
  <rect x="329.9" y="5.500" width="31.800" height="31.400" fill="#b9b9b9" opacity=".55"/>
  <rect x="329.6" y="5.100" width="31.400" height="31.300" fill="#ffffff"/>
  <rect x="331.1" y="6.500" width="14.200" height="29.700" fill="#008000"/>
  <rect x="346.9" y="6.500" width="13.700" height="29.700" fill="#ffff00"/>
  <rect x="424.300" y="5" width="31.800" height="31.800" fill="#b9b9b9" opacity=".5"/>
  <rect x="424" y="4.600" width="31.600" height="31.800" fill="#ffffff"/>
  <rect x="425" y="5.300" width="30.200" height="31" fill="#ffff00"/>
  <rect x="425" y="5.300" width="30.200" height="31" fill="url(#dots)"/>
</svg>
<div class="t sf" style="left:903px;top:192px;font-size:13px;line-height:14px;color:#000;font-weight:bold">试验曲线</div>
<div class="t sf" style="left:1000px;top:192px;font-size:12px;line-height:14px;color:#000">多个试样</div>
<div class="t sf" style="left:1095px;top:192px;font-size:12px;line-height:14px;color:#000">试验信息</div>
<div class="t sf" style="left:1190px;top:192px;font-size:12px;line-height:14px;color:#000">试验报告</div>

<svg class="chart" style="left:0;top:0" width="1600" height="900" viewBox="0 0 1600 900" shape-rendering="crispEdges">
<path d="M336.3 279.5V783.5" stroke="#828282" stroke-width="1" stroke-dasharray="1 1" fill="none"/>
<path d="M422.1 279.5V783.5" stroke="#828282" stroke-width="1" stroke-dasharray="1 1" fill="none"/>
<path d="M507.9 279.5V783.5" stroke="#828282" stroke-width="1" stroke-dasharray="1 1" fill="none"/>
<path d="M593.7 279.5V783.5" stroke="#828282" stroke-width="1" stroke-dasharray="1 1" fill="none"/>
<path d="M679.5 279.5V783.5" stroke="#828282" stroke-width="1" stroke-dasharray="1 1" fill="none"/>
<path d="M250.5 279.5H679.5" stroke="#828282" stroke-width="1" stroke-dasharray="1 1" fill="none"/>
<path d="M250.5 363.5H679.5" stroke="#828282" stroke-width="1" stroke-dasharray="1 1" fill="none"/>
<path d="M250.5 447.5H679.5" stroke="#828282" stroke-width="1" stroke-dasharray="1 1" fill="none"/>
<path d="M250.5 531.5H679.5" stroke="#828282" stroke-width="1" stroke-dasharray="1 1" fill="none"/>
<path d="M250.5 615.5H679.5" stroke="#828282" stroke-width="1" stroke-dasharray="1 1" fill="none"/>
<path d="M250.5 699.5H679.5" stroke="#828282" stroke-width="1" stroke-dasharray="1 1" fill="none"/>
<path d="M250.5 783.5H699" stroke="#800080" stroke-width="1" fill="none"/>
<path d="M250.5 260V783.5" stroke="#800080" stroke-width="1" fill="none"/>
<path d="M250.5 783.5H679.5" stroke="#c8b4c8" stroke-width="1" stroke-dasharray="1 1" fill="none"/>
<path d="M250.5 279.5V783.5" stroke="#c8b4c8" stroke-width="1" stroke-dasharray="1 1" fill="none"/>
<path d="M700 783.5l-6 -2.500 1.500 2.500 -1.500 2.500z" fill="#800080"/>
<path d="M250.5 259l-2.500 6 2.500 -1.500 2.500 1.500z" fill="#800080"/>
<path d="M250.5 783.5V788.5" stroke="#333" stroke-width="1" fill="none"/>
<path d="M271.95 783.5V786.5" stroke="#111" stroke-width="1" fill="none"/>
<path d="M293.4 783.5V786.5" stroke="#111" stroke-width="1" fill="none"/>
<path d="M314.85 783.5V786.5" stroke="#111" stroke-width="1" fill="none"/>
<path d="M336.3 783.5V788.5" stroke="#333" stroke-width="1" fill="none"/>
<path d="M357.75 783.5V786.5" stroke="#111" stroke-width="1" fill="none"/>
<path d="M379.2 783.5V786.5" stroke="#111" stroke-width="1" fill="none"/>
<path d="M400.65 783.5V786.5" stroke="#111" stroke-width="1" fill="none"/>
<path d="M422.1 783.5V788.5" stroke="#333" stroke-width="1" fill="none"/>
<path d="M443.55 783.5V786.5" stroke="#111" stroke-width="1" fill="none"/>
<path d="M465 783.5V786.5" stroke="#111" stroke-width="1" fill="none"/>
<path d="M486.45 783.5V786.5" stroke="#111" stroke-width="1" fill="none"/>
<path d="M507.9 783.5V788.5" stroke="#333" stroke-width="1" fill="none"/>
<path d="M529.35 783.5V786.5" stroke="#111" stroke-width="1" fill="none"/>
<path d="M550.8 783.5V786.5" stroke="#111" stroke-width="1" fill="none"/>
<path d="M572.25 783.5V786.5" stroke="#111" stroke-width="1" fill="none"/>
<path d="M593.7 783.5V788.5" stroke="#333" stroke-width="1" fill="none"/>
<path d="M615.15 783.5V786.5" stroke="#111" stroke-width="1" fill="none"/>
<path d="M636.6 783.5V786.5" stroke="#111" stroke-width="1" fill="none"/>
<path d="M658.05 783.5V786.5" stroke="#111" stroke-width="1" fill="none"/>
<path d="M679.5 783.5V788.5" stroke="#333" stroke-width="1" fill="none"/>
<path d="M245.5 279.5H250.5" stroke="#777" stroke-width="1" fill="none"/>
<path d="M247.5 300.5H250.5" stroke="#111" stroke-width="1" fill="none"/>
<path d="M247.5 321.5H250.5" stroke="#111" stroke-width="1" fill="none"/>
<path d="M247.5 342.5H250.5" stroke="#111" stroke-width="1" fill="none"/>
<path d="M245.5 363.5H250.5" stroke="#777" stroke-width="1" fill="none"/>
<path d="M247.5 384.5H250.5" stroke="#111" stroke-width="1" fill="none"/>
<path d="M247.5 405.5H250.5" stroke="#111" stroke-width="1" fill="none"/>
<path d="M247.5 426.5H250.5" stroke="#111" stroke-width="1" fill="none"/>
<path d="M245.5 447.5H250.5" stroke="#777" stroke-width="1" fill="none"/>
<path d="M247.5 468.5H250.5" stroke="#111" stroke-width="1" fill="none"/>
<path d="M247.5 489.5H250.5" stroke="#111" stroke-width="1" fill="none"/>
<path d="M247.5 510.5H250.5" stroke="#111" stroke-width="1" fill="none"/>
<path d="M245.5 531.5H250.5" stroke="#777" stroke-width="1" fill="none"/>
<path d="M247.5 552.5H250.5" stroke="#111" stroke-width="1" fill="none"/>
<path d="M247.5 573.5H250.5" stroke="#111" stroke-width="1" fill="none"/>
<path d="M247.5 594.5H250.5" stroke="#111" stroke-width="1" fill="none"/>
<path d="M245.5 615.5H250.5" stroke="#777" stroke-width="1" fill="none"/>
<path d="M247.5 636.5H250.5" stroke="#111" stroke-width="1" fill="none"/>
<path d="M247.5 657.5H250.5" stroke="#111" stroke-width="1" fill="none"/>
<path d="M247.5 678.5H250.5" stroke="#111" stroke-width="1" fill="none"/>
<path d="M245.5 699.5H250.5" stroke="#777" stroke-width="1" fill="none"/>
<path d="M247.5 720.5H250.5" stroke="#111" stroke-width="1" fill="none"/>
<path d="M247.5 741.5H250.5" stroke="#111" stroke-width="1" fill="none"/>
<path d="M247.5 762.5H250.5" stroke="#111" stroke-width="1" fill="none"/>
<path d="M245.5 783.5H250.5" stroke="#777" stroke-width="1" fill="none"/>
<path d="M250.5 329.5H679.5" stroke="#ff0000" stroke-width="1" stroke-dasharray="3 1 1 1" fill="none"/>
<path d="M250.5 453.5H679.5" stroke="#ff0000" stroke-width="1" stroke-dasharray="3 1 1 1" fill="none"/>
<path d="M250.5 699.5H679.5" stroke="#006400" stroke-width="1" stroke-dasharray="3 1 1 1" fill="none"/>
<path d="M250.5 279.5V783.5" stroke="#008000" stroke-width="1" stroke-dasharray="3 1 1 1" fill="none"/>
</svg>
<svg class="chart" style="left:0;top:0" width="1600" height="900" viewBox="0 0 1600 900">
<path d="M250.8 722 L250.9 690 L251.1 615 L252.3 565 L254 531 L256 520 L258 492 L260 472 L262.8 454 L265 443 L268 435.5 L272 431 L275 429.5 L278 427 L281 416 L283.8 406.5 L284.6 388 L285.8 364 L285.8 363.51 L286.53 363.69 L287.27 365.76 L288 364.8 L288.72 366.5 L289.44 366.42 L290.16 365.96 L290.88 367.62 L291.6 366.7 L292.45 367.44 L293.3 366.05 L294.15 365.73 L295 366.29 L295.71 367.13 L296.43 364.88 L297.14 364.87 L297.86 365.71 L298.57 366.33 L299.29 365 L300 364.21 L300.75 365.46 L301.5 362.48 L302.25 364.38 L303 362.41 L303.75 361.63 L304.5 361.18 L305.25 361.34 L306 362.39 L306.8 360.41 L307.6 361.33 L308.4 361.29 L309.2 360.34 L310 360.63 L310.72 359.18 L311.44 359.07 L312.16 359.38 L312.88 360.61 L313.6 359.8 L314 372 L314.8 398 L315.8 393 L317 395 L318.7 390.6 L318.7 390.23 L319.51 390.7 L320.31 390.36 L321.12 389.99 L321.93 390.9 L322.74 390.64 L323.54 389.66 L324.35 390.25 L325.16 390.08 L325.96 390.71 L326.77 390.34 L327.58 389.39 L328.39 390.7 L329.19 388.91 L330 389.44 L330.83 390.09 L331.67 388.86 L332.5 389.51 L333.33 388.59 L334.17 389.83 L335 390 L335.83 389.59 L336.67 390.17 L337.5 389.03 L338.33 389.77 L339.17 389.54 L340 389.49 L340.83 389.22 L341.67 389.97 L342.5 390.16 L343.33 389.19 L344.17 389.55 L345 388.32 L345.88 389.53 L346.75 389.34 L347.62 389.96 L348.5 389.54 L349.38 388.39 L350.25 388.52 L351.12 389.01 L352 387.65 L352.81 388.69 L353.62 388.26 L354.44 388.32 L355.25 388.37 L356.06 389.95 L356.88 388.83 L357.69 389.23 L358.5 389.68 L359.31 390.81 L360.12 389.39 L360.94 390.29 L361.75 390.65 L362.56 391.48 L363.38 391.51 L364.19 391.77 L365 390.76 L365.83 391.01 L366.67 390.87 L367.5 391.9 L368.33 392.03 L369.17 390.39 L370 390.42 L370.83 390.51 L371.67 390.49 L372.5 390.97 L373.33 391.16 L374.17 390.48 L375 389.94 L375.83 390.75 L376.67 390.63 L377.5 391 L378.33 391.75 L379.17 391.2 L380 390.83 L380.8 391.04 L381.6 391.15 L382.4 389.91 L383.2 391.6 L384 391.36 L384.8 391.55 L385.6 391.4 L386.4 390.58 L387.2 390.6 L388 390.01 L388.8 391.07 L389.6 389.92 L390.4 389.93 L391.2 390.22 L392 390.12 L392.8 390.48 L393.6 389.91 L394.4 389.8 L395.2 390.1 L396 390 L396.8 390.53 L397.6 389.85 L398.4 391.55 L399.2 391.03 L400 390.1 L400.8 390.31 L401.6 390.5 L402.4 390.54 L403.2 390.06 L404 391.52 L404.8 391.81 L405.6 390.76 L406.4 390.8 L407.2 390.01 L408 390.04 L408.8 390.53 L409.6 390.38 L410.4 391.51 L411.2 390.18 L412 389.91 L412.8 391.77 L413.6 390.92 L414.4 390.17 L415.2 390.96 L416 389.93 L416.8 390.94 L417.6 391.85 L418.4 391.62 L419.2 391.29 L420 390.42 L420.81 390.73 L421.62 390.43 L422.43 391.74 L423.24 391.37 L424.05 391.96 L424.85 391.16 L425.66 391.05 L426.47 392.32 L427.28 392.77 L428.09 392.61 L428.9 392.61 L430 393.32 L430.6 394.14 L431.2 394.53 L431.8 395.72 L432.4 396.46 L433 397.03 L433.5 397.94 L434 399.11 L434.5 400.01 L435 401.36 L435.5 402.54 L436 402.95 L436.8 404.6 L437.6 405.82 L438.4 406.96 L438.82 405.46 L439.24 404.42 L439.66 403.53 L440.08 402.6 L440.5 401.7 L441 401.12 L441.5 400.4 L442 399.34 L442.5 397.98 L443 397.15 L443.93 396.53 L444.87 395.05 L445.8 394.86 L446.83 394.99 L447.87 394.75 L448.9 394.6 L449.93 394.21 L450.97 393.8 L452 394.29 L453 393.73 L454 394.1 L455 394.17 L456 393.5 L457.13 393.3 L458.27 393.65 L459.4 393.22 L460.27 391.67 L461.13 390.63 L462 389.65 L462.42 389.4 L462.83 388.31 L463.25 386.65 L463.67 386.33 L464.08 385.48 L464.5 384.16 L465 382.85 L465.5 382.05 L466 380.63 L466.5 379.51 L467.9 379.87 L469.5 381.15 L469.83 381.94 L470.17 383.27 L470.5 383.68 L470.83 385.04 L471.17 385.91 L471.5 386.21 L472.3 387.28 L473.1 388.34 L473.9 389.32 L474.7 390.69 L474.7 390.12 L475.52 390.45 L476.33 389.89 L477.15 391.46 L477.96 390.36 L478.78 390.58 L479.6 390.84 L480.41 391.5 L481.23 390.54 L482.05 391.55 L482.86 390.73 L483.68 390.81 L484.49 390.8 L485.31 389.81 L486.13 390.66 L486.94 390.16 L487.76 389.81 L488.57 391.42 L489.39 390.18 L490.21 390.79 L491.02 391.31 L491.84 390.98 L492.65 390.54 L493.47 390.93 L494.29 391.02 L495.1 391.49 L495.92 390.15 L496.74 391.07 L497.55 390.46 L498.37 390.53 L499.18 391.53 L500 391.02 L500.8 391.13 L501.6 391.53 L502.4 391.83 L503.2 390.9 L504 391.24 L504.8 391.03 L505.6 391.04 L506.4 391.41 L507.2 390.93 L508 391.09 L508.8 390.99 L509.6 391.92 L510.4 391.43 L511.2 391.79 L512 391.92 L512.8 390.56 L513.6 391.16 L514.4 391.93 L515.2 391.73 L516 390.33 L516.8 390.3 L517.6 390.94 L518.4 390.21 L519.2 390.55 L520 390.21 L520.8 391.41 L521.6 391.64 L522.4 391.87 L523.2 390.39 L524 391.51 L524.8 391.4 L525.6 390.37 L526.4 391.85 L527.2 392.03 L528 390.53 L528.8 392 L529.6 390.9 L530.4 391.08 L531.2 392.08 L532 391.77 L532.8 390.43 L533.6 390.98 L534.4 391.15 L535.2 390.8 L536 390.51 L536.8 390.76 L537.6 391.57 L538.4 390.17 L539.2 391.24 L540 391.01 L540.8 390.17 L541.6 390.8 L542.4 391.39 L543.2 391.17 L544 390.28 L544.8 392.12 L545.6 391.73 L546.4 392.1 L547.2 390.37 L548 390.69 L548.8 390.24 L549.6 391.72 L550.4 390.71 L551.2 390.43 L552 391.02 L552.8 392 L553.6 391.82 L554.4 390.7 L555.2 390.48 L556 392.03 L556.8 391.33 L557.6 391.59 L558.4 390.37 L559.2 390.31 L560 391.58 L560.8 391.05 L561.6 390.35 L562.4 392.08 L563.2 391.48 L564 391.81 L564.8 390.38 L565.6 391.93 L566.4 390.35 L567.2 391.94 L568 391.13 L568.8 390.9 L569.6 391.33 L570.4 392.08 L571.2 390.76 L572 390.49 L572.8 391.29 L573.6 390.71 L574.4 390.45 L575.2 390.56 L576 390.34 L576.8 390.65 L577.6 390.87 L578.4 390.86 L579.2 391.77 L580 390.83 L580.8 391.25 L581.6 390.61 L582.4 390.95 L583.2 390.29 L584 390.76 L584.8 390.29 L585.6 391.73 L586.4 391.37 L587.2 390.65 L588 391.22 L588.8 392.14 L589.6 390.49 L590.4 391.91 L591.2 391.14 L592 391.27 L592.8 391.95 L593.6 391.07 L594.4 391.3 L595.2 391.66 L596 392.25 L596.8 390.98 L597.6 391.96 L598.4 391.71 L599.2 391.57 L600 391.11 L600.82 391 L601.63 390.41 L602.45 390.56 L603.26 390.44 L604.08 391.78 L604.89 390.81 L605.71 390.63 L606.52 390.47 L607.34 391.98 L608.16 392.04 L608.97 391.64 L609.79 390.86 L610.6 390.78 L611.42 390.89 L612.23 391.22 L613.05 390.62 L613.86 391.19 L614.68 390.83 L615.5 392.22 L616.31 392.25 L617.13 391.39 L617.94 390.79 L618.76 392.23 L619.57 390.92 L620.39 391.01 L621.2 390.3 L622.02 391.06 L622.84 391.25 L623.65 391.31 L624.47 390.7 L625.28 391.31 L626.1 390.31 L626.91 390.83 L627.73 390.48 L628.54 391.1 L629.36 390.38 L630.18 390.34 L630.99 390.91 L631.81 390.77 L632.62 391.47 L633.44 391.36 L634.25 391.8 L635.07 391.62 L635.88 391.73 L636.7 392.06" stroke="#33265f" stroke-width="1.100" fill="none" stroke-linejoin="round"/>
<text x="248.5" y="275.7" text-anchor="end" font-size="10.67" fill="#000" font-family="Liberation Sans, Noto Sans CJK SC, sans-serif" >0.00150</text>
<text x="248.5" y="359.7" text-anchor="end" font-size="10.67" fill="#000" font-family="Liberation Sans, Noto Sans CJK SC, sans-serif" >0.00120</text>
<text x="248.5" y="443.7" text-anchor="end" font-size="10.67" fill="#000" font-family="Liberation Sans, Noto Sans CJK SC, sans-serif" >0.00090</text>
<text x="248.5" y="527.7" text-anchor="end" font-size="10.67" fill="#000" font-family="Liberation Sans, Noto Sans CJK SC, sans-serif" >0.00060</text>
<text x="248.5" y="611.7" text-anchor="end" font-size="10.67" fill="#000" font-family="Liberation Sans, Noto Sans CJK SC, sans-serif" >0.00030</text>
<text x="248.5" y="695.7" text-anchor="end" font-size="10.67" fill="#000" font-family="Liberation Sans, Noto Sans CJK SC, sans-serif" >0.00000</text>
<text x="248.5" y="778.2" text-anchor="end" font-size="10.67" fill="#000" font-family="Liberation Sans, Noto Sans CJK SC, sans-serif" >-</text>
<text x="248.5" y="790.2" text-anchor="end" font-size="10.67" fill="#000" font-family="Liberation Sans, Noto Sans CJK SC, sans-serif" >0.00030</text>
<text x="250" y="249.7" text-anchor="middle" font-size="10.67" fill="#000" font-family="Liberation Sans, Noto Sans CJK SC, sans-serif" >-</text>
<text x="252.5" y="795.7" text-anchor="start" font-size="10.67" fill="#000" font-family="Liberation Sans, Noto Sans CJK SC, sans-serif" >0.0</text>
<text x="338.3" y="795.7" text-anchor="start" font-size="10.67" fill="#000" font-family="Liberation Sans, Noto Sans CJK SC, sans-serif" >6.0</text>
<text x="424.1" y="795.7" text-anchor="start" font-size="10.67" fill="#000" font-family="Liberation Sans, Noto Sans CJK SC, sans-serif" >12.0</text>
<text x="509.9" y="795.7" text-anchor="start" font-size="10.67" fill="#000" font-family="Liberation Sans, Noto Sans CJK SC, sans-serif" >18.0</text>
<text x="595.7" y="795.7" text-anchor="start" font-size="10.67" fill="#000" font-family="Liberation Sans, Noto Sans CJK SC, sans-serif" >24.0</text>
<text x="681.5" y="795.7" text-anchor="start" font-size="10.67" fill="#000" font-family="Liberation Sans, Noto Sans CJK SC, sans-serif" >30.0</text>
<text x="696" y="813.7" text-anchor="start" font-size="10.67" fill="#000" font-family="Liberation Sans, Noto Sans CJK SC, sans-serif" >s</text>
<text x="465" y="239.2" text-anchor="middle" font-size="14.67" fill="#000" font-family="Liberation Sans, Noto Serif CJK SC, serif" >试验曲线*</text>
<text x="463.5" y="812.7" text-anchor="middle" font-size="12.3" fill="#000" font-family="Liberation Sans, Noto Serif CJK SC, serif" >时间</text>
<text x="207.5" y="497.7" text-anchor="middle" font-size="12" fill="#000" font-family="Liberation Sans, Noto Serif CJK SC, serif" >应</text>
<text x="207.5" y="509.6" text-anchor="middle" font-size="12" fill="#000" font-family="Liberation Sans, Noto Serif CJK SC, serif" >变</text>
<text x="207.5" y="521.5" text-anchor="middle" font-size="12" fill="#000" font-family="Liberation Sans, Noto Serif CJK SC, serif" >速</text>
<text x="207.5" y="533.4" text-anchor="middle" font-size="12" fill="#000" font-family="Liberation Sans, Noto Serif CJK SC, serif" >度</text>
<g transform="translate(707 219)"><rect x="0.5" y="0.5" width="18" height="18" fill="#fff" stroke="#000" stroke-width="1.2"/><path d="M3.500 15 L8 10.500 M11.500 9.800 L15.500 12.300" stroke="#000" stroke-width="1.100" fill="none"/><rect x="7.300" y="6.800" width="5" height="4.300" fill="#000"/><path d="M6.300 9h2" stroke="#000" stroke-width="1"/></g>
</svg>
<svg class="chart" style="left:0;top:0" width="1600" height="900" viewBox="0 0 1600 900" shape-rendering="crispEdges">
<path d="M896.5 277.5V462.5" stroke="#828282" stroke-width="1" stroke-dasharray="1 1" fill="none"/>
<path d="M1004.5 277.5V462.5" stroke="#828282" stroke-width="1" stroke-dasharray="1 1" fill="none"/>
<path d="M1112.5 277.5V462.5" stroke="#828282" stroke-width="1" stroke-dasharray="1 1" fill="none"/>
<path d="M1219.5 277.5V462.5" stroke="#828282" stroke-width="1" stroke-dasharray="1 1" fill="none"/>
<path d="M1327.5 277.5V462.5" stroke="#828282" stroke-width="1" stroke-dasharray="1 1" fill="none"/>
<path d="M1435.5 277.5V462.5" stroke="#828282" stroke-width="1" stroke-dasharray="1 1" fill="none"/>
<path d="M1542.5 277.5V462.5" stroke="#828282" stroke-width="1" stroke-dasharray="1 1" fill="none"/>
<path d="M789.5 277.5H1542.5" stroke="#828282" stroke-width="1" stroke-dasharray="1 1" fill="none"/>
<path d="M789.5 339.5H1542.5" stroke="#828282" stroke-width="1" stroke-dasharray="1 1" fill="none"/>
<path d="M789.5 400.5H1542.5" stroke="#828282" stroke-width="1" stroke-dasharray="1 1" fill="none"/>
<path d="M789.5 462.5H1562" stroke="#800080" stroke-width="1" fill="none"/>
<path d="M789.5 258.5V462.5" stroke="#800080" stroke-width="1" fill="none"/>
<path d="M789.5 462.5H1542.5" stroke="#c8b4c8" stroke-width="1" stroke-dasharray="1 1" fill="none"/>
<path d="M789.5 277.5V462.5" stroke="#c8b4c8" stroke-width="1" stroke-dasharray="1 1" fill="none"/>
<path d="M1563 462.5l-6 -2.500 1.500 2.500 -1.500 2.500z" fill="#800080"/>
<path d="M789.5 257.5l-2.500 6 2.500 -1.500 2.500 1.500z" fill="#800080"/>
<path d="M789.5 462.5V467.5" stroke="#333" stroke-width="1" fill="none"/>
<path d="M816.25 462.5V465.5" stroke="#111" stroke-width="1" fill="none"/>
<path d="M843 462.5V465.5" stroke="#111" stroke-width="1" fill="none"/>
<path d="M869.75 462.5V465.5" stroke="#111" stroke-width="1" fill="none"/>
<path d="M896.5 462.5V467.5" stroke="#333" stroke-width="1" fill="none"/>
<path d="M923.25 462.5V465.5" stroke="#111" stroke-width="1" fill="none"/>
<path d="M950 462.5V465.5" stroke="#111" stroke-width="1" fill="none"/>
<path d="M976.75 462.5V465.5" stroke="#111" stroke-width="1" fill="none"/>
<path d="M1004.5 462.5V467.5" stroke="#333" stroke-width="1" fill="none"/>
<path d="M1031.25 462.5V465.5" stroke="#111" stroke-width="1" fill="none"/>
<path d="M1058 462.5V465.5" stroke="#111" stroke-width="1" fill="none"/>
<path d="M1084.75 462.5V465.5" stroke="#111" stroke-width="1" fill="none"/>
<path d="M1112.5 462.5V467.5" stroke="#333" stroke-width="1" fill="none"/>
<path d="M1139.25 462.5V465.5" stroke="#111" stroke-width="1" fill="none"/>
<path d="M1166 462.5V465.5" stroke="#111" stroke-width="1" fill="none"/>
<path d="M1192.75 462.5V465.5" stroke="#111" stroke-width="1" fill="none"/>
<path d="M1219.5 462.5V467.5" stroke="#333" stroke-width="1" fill="none"/>
<path d="M1246.25 462.5V465.5" stroke="#111" stroke-width="1" fill="none"/>
<path d="M1273 462.5V465.5" stroke="#111" stroke-width="1" fill="none"/>
<path d="M1299.75 462.5V465.5" stroke="#111" stroke-width="1" fill="none"/>
<path d="M1327.5 462.5V467.5" stroke="#333" stroke-width="1" fill="none"/>
<path d="M1354.25 462.5V465.5" stroke="#111" stroke-width="1" fill="none"/>
<path d="M1381 462.5V465.5" stroke="#111" stroke-width="1" fill="none"/>
<path d="M1407.75 462.5V465.5" stroke="#111" stroke-width="1" fill="none"/>
<path d="M1435.5 462.5V467.5" stroke="#333" stroke-width="1" fill="none"/>
<path d="M1462.25 462.5V465.5" stroke="#111" stroke-width="1" fill="none"/>
<path d="M1489 462.5V465.5" stroke="#111" stroke-width="1" fill="none"/>
<path d="M1515.75 462.5V465.5" stroke="#111" stroke-width="1" fill="none"/>
<path d="M1542.5 462.5V467.5" stroke="#333" stroke-width="1" fill="none"/>
<path d="M784.5 277.5H789.5" stroke="#777" stroke-width="1" fill="none"/>
<path d="M786.5 293H789.5" stroke="#111" stroke-width="1" fill="none"/>
<path d="M786.5 308.5H789.5" stroke="#111" stroke-width="1" fill="none"/>
<path d="M786.5 324H789.5" stroke="#111" stroke-width="1" fill="none"/>
<path d="M784.5 339.5H789.5" stroke="#777" stroke-width="1" fill="none"/>
<path d="M786.5 355H789.5" stroke="#111" stroke-width="1" fill="none"/>
<path d="M786.5 370.5H789.5" stroke="#111" stroke-width="1" fill="none"/>
<path d="M786.5 386H789.5" stroke="#111" stroke-width="1" fill="none"/>
<path d="M784.5 400.5H789.5" stroke="#777" stroke-width="1" fill="none"/>
<path d="M786.5 416H789.5" stroke="#111" stroke-width="1" fill="none"/>
<path d="M786.5 431.5H789.5" stroke="#111" stroke-width="1" fill="none"/>
<path d="M786.5 447H789.5" stroke="#111" stroke-width="1" fill="none"/>
<path d="M784.5 462.5H789.5" stroke="#777" stroke-width="1" fill="none"/>
<path d="M896.5 277.5V462.5" stroke="#006400" stroke-width="1" stroke-dasharray="3 1 1 1" fill="none"/>
<path d="M789.5 462.5H1542.5" stroke="#006400" stroke-width="1" stroke-dasharray="3 1 1 1" fill="none"/>
</svg>
<svg class="chart" style="left:0;top:0" width="1600" height="900" viewBox="0 0 1600 900">
<path d="M896.4 462 L937.1 318.5 L938.5 322 L940.9 330.6 L943.5 334.5 L946.4 337.5 L955 337.2 L964.3 336.5 L985 336 L1002.2 335.1 L1015 336.2 L1033.2 338.2 L1078 338.2 L1079.8 337.2 L1147 337.2 L1152 334.5 L1157.3 332.3 L1170 330.3 L1190 327.3 L1219.6 323.4 L1270 317.3 L1327.5 311 L1380 305.5 L1427 301" stroke="#33265f" stroke-width="1.100" fill="none" stroke-linejoin="round"/>
<text x="786" y="273.7" text-anchor="end" font-size="10.67" fill="#000" font-family="Liberation Sans, Noto Sans CJK SC, sans-serif" >600</text>
<text x="786" y="335.7" text-anchor="end" font-size="10.67" fill="#000" font-family="Liberation Sans, Noto Sans CJK SC, sans-serif" >400</text>
<text x="786" y="396.7" text-anchor="end" font-size="10.67" fill="#000" font-family="Liberation Sans, Noto Sans CJK SC, sans-serif" >200</text>
<text x="786" y="458.7" text-anchor="end" font-size="10.67" fill="#000" font-family="Liberation Sans, Noto Sans CJK SC, sans-serif" >0</text>
<text x="790.5" y="474.7" text-anchor="start" font-size="10.67" fill="#000" font-family="Liberation Sans, Noto Sans CJK SC, sans-serif" >-0.0060</text>
<text x="898.5" y="474.7" text-anchor="start" font-size="10.67" fill="#000" font-family="Liberation Sans, Noto Sans CJK SC, sans-serif" >0.0000</text>
<text x="1006.5" y="474.7" text-anchor="start" font-size="10.67" fill="#000" font-family="Liberation Sans, Noto Sans CJK SC, sans-serif" >0.0060</text>
<text x="1114.5" y="474.7" text-anchor="start" font-size="10.67" fill="#000" font-family="Liberation Sans, Noto Sans CJK SC, sans-serif" >0.0120</text>
<text x="1221.5" y="474.7" text-anchor="start" font-size="10.67" fill="#000" font-family="Liberation Sans, Noto Sans CJK SC, sans-serif" >0.0180</text>
<text x="1329.5" y="474.7" text-anchor="start" font-size="10.67" fill="#000" font-family="Liberation Sans, Noto Sans CJK SC, sans-serif" >0.0240</text>
<text x="1437.5" y="474.7" text-anchor="start" font-size="10.67" fill="#000" font-family="Liberation Sans, Noto Sans CJK SC, sans-serif" >0.0300</text>
<text x="1544.5" y="474.7" text-anchor="start" font-size="10.67" fill="#000" font-family="Liberation Sans, Noto Sans CJK SC, sans-serif" >0.0360</text>
<text x="777.5" y="247.2" text-anchor="start" font-size="10.67" fill="#000" font-family="Liberation Sans, Noto Sans CJK SC, sans-serif" >MPa</text>
<text x="1544" y="492.2" text-anchor="start" font-size="10.67" fill="#4b004b" font-family="Liberation Sans, Noto Sans CJK SC, sans-serif" >mm/mm</text>
<text x="1164.5" y="238.2" text-anchor="middle" font-size="14.67" fill="#000" font-family="Liberation Sans, Noto Serif CJK SC, serif" >试验曲线1</text>
<text x="1164.5" y="492.7" text-anchor="middle" font-size="12.3" fill="#000" font-family="Liberation Sans, Noto Serif CJK SC, serif" >应变</text>
<text x="746" y="347.7" text-anchor="middle" font-size="12" fill="#000" font-family="Liberation Sans, Noto Serif CJK SC, serif" >应</text>
<text x="746" y="359.2" text-anchor="middle" font-size="12" fill="#000" font-family="Liberation Sans, Noto Serif CJK SC, serif" >力</text>
<g transform="translate(1570 217)"><rect x="0.5" y="0.5" width="18" height="18" fill="#fff" stroke="#000" stroke-width="1.2"/><path d="M3.500 15 L8 10.500 M11.500 9.800 L15.500 12.300" stroke="#000" stroke-width="1.100" fill="none"/><rect x="7.300" y="6.800" width="5" height="4.300" fill="#000"/><path d="M6.300 9h2" stroke="#000" stroke-width="1"/></g>
</svg>
<svg class="chart" style="left:0;top:0" width="1600" height="900" viewBox="0 0 1600 900" shape-rendering="crispEdges">
<path d="M939.5 578.5V783.5" stroke="#828282" stroke-width="1" stroke-dasharray="1 1" fill="none"/>
<path d="M1090.5 578.5V783.5" stroke="#828282" stroke-width="1" stroke-dasharray="1 1" fill="none"/>
<path d="M1241.5 578.5V783.5" stroke="#828282" stroke-width="1" stroke-dasharray="1 1" fill="none"/>
<path d="M1391.5 578.5V783.5" stroke="#828282" stroke-width="1" stroke-dasharray="1 1" fill="none"/>
<path d="M1542.5 578.5V783.5" stroke="#828282" stroke-width="1" stroke-dasharray="1 1" fill="none"/>
<path d="M788.5 578.5H1542.5" stroke="#828282" stroke-width="1" stroke-dasharray="1 1" fill="none"/>
<path d="M788.5 607.5H1542.5" stroke="#828282" stroke-width="1" stroke-dasharray="1 1" fill="none"/>
<path d="M788.5 637.5H1542.5" stroke="#828282" stroke-width="1" stroke-dasharray="1 1" fill="none"/>
<path d="M788.5 666.5H1542.5" stroke="#828282" stroke-width="1" stroke-dasharray="1 1" fill="none"/>
<path d="M788.5 695.5H1542.5" stroke="#828282" stroke-width="1" stroke-dasharray="1 1" fill="none"/>
<path d="M788.5 724.5H1542.5" stroke="#828282" stroke-width="1" stroke-dasharray="1 1" fill="none"/>
<path d="M788.5 754.5H1542.5" stroke="#828282" stroke-width="1" stroke-dasharray="1 1" fill="none"/>
<path d="M788.5 783.5H1562" stroke="#800080" stroke-width="1" fill="none"/>
<path d="M788.5 558.5V783.5" stroke="#800080" stroke-width="1" fill="none"/>
<path d="M788.5 783.5H1542.5" stroke="#c8b4c8" stroke-width="1" stroke-dasharray="1 1" fill="none"/>
<path d="M788.5 578.5V783.5" stroke="#c8b4c8" stroke-width="1" stroke-dasharray="1 1" fill="none"/>
<path d="M1563 783.5l-6 -2.500 1.500 2.500 -1.500 2.500z" fill="#800080"/>
<path d="M788.5 557.5l-2.500 6 2.500 -1.500 2.500 1.500z" fill="#800080"/>
<path d="M788.5 783.5V788.5" stroke="#333" stroke-width="1" fill="none"/>
<path d="M826.25 783.5V786.5" stroke="#111" stroke-width="1" fill="none"/>
<path d="M864 783.5V786.5" stroke="#111" stroke-width="1" fill="none"/>
<path d="M901.75 783.5V786.5" stroke="#111" stroke-width="1" fill="none"/>
<path d="M939.5 783.5V788.5" stroke="#333" stroke-width="1" fill="none"/>
<path d="M977.25 783.5V786.5" stroke="#111" stroke-width="1" fill="none"/>
<path d="M1015 783.5V786.5" stroke="#111" stroke-width="1" fill="none"/>
<path d="M1052.75 783.5V786.5" stroke="#111" stroke-width="1" fill="none"/>
<path d="M1090.5 783.5V788.5" stroke="#333" stroke-width="1" fill="none"/>
<path d="M1128.25 783.5V786.5" stroke="#111" stroke-width="1" fill="none"/>
<path d="M1166 783.5V786.5" stroke="#111" stroke-width="1" fill="none"/>
<path d="M1203.75 783.5V786.5" stroke="#111" stroke-width="1" fill="none"/>
<path d="M1241.5 783.5V788.5" stroke="#333" stroke-width="1" fill="none"/>
<path d="M1279.25 783.5V786.5" stroke="#111" stroke-width="1" fill="none"/>
<path d="M1317 783.5V786.5" stroke="#111" stroke-width="1" fill="none"/>
<path d="M1354.75 783.5V786.5" stroke="#111" stroke-width="1" fill="none"/>
<path d="M1391.5 783.5V788.5" stroke="#333" stroke-width="1" fill="none"/>
<path d="M1429.25 783.5V786.5" stroke="#111" stroke-width="1" fill="none"/>
<path d="M1467 783.5V786.5" stroke="#111" stroke-width="1" fill="none"/>
<path d="M1504.75 783.5V786.5" stroke="#111" stroke-width="1" fill="none"/>
<path d="M1542.5 783.5V788.5" stroke="#333" stroke-width="1" fill="none"/>
<path d="M783.5 578.5H788.5" stroke="#777" stroke-width="1" fill="none"/>
<path d="M785.5 585.75H788.5" stroke="#111" stroke-width="1" fill="none"/>
<path d="M785.5 593H788.5" stroke="#111" stroke-width="1" fill="none"/>
<path d="M785.5 600.25H788.5" stroke="#111" stroke-width="1" fill="none"/>
<path d="M783.5 607.5H788.5" stroke="#777" stroke-width="1" fill="none"/>
<path d="M785.5 614.75H788.5" stroke="#111" stroke-width="1" fill="none"/>
<path d="M785.5 622H788.5" stroke="#111" stroke-width="1" fill="none"/>
<path d="M785.5 629.25H788.5" stroke="#111" stroke-width="1" fill="none"/>
<path d="M783.5 637.5H788.5" stroke="#777" stroke-width="1" fill="none"/>
<path d="M785.5 644.75H788.5" stroke="#111" stroke-width="1" fill="none"/>
<path d="M785.5 652H788.5" stroke="#111" stroke-width="1" fill="none"/>
<path d="M785.5 659.25H788.5" stroke="#111" stroke-width="1" fill="none"/>
<path d="M783.5 666.5H788.5" stroke="#777" stroke-width="1" fill="none"/>
<path d="M785.5 673.75H788.5" stroke="#111" stroke-width="1" fill="none"/>
<path d="M785.5 681H788.5" stroke="#111" stroke-width="1" fill="none"/>
<path d="M785.5 688.25H788.5" stroke="#111" stroke-width="1" fill="none"/>
<path d="M783.5 695.5H788.5" stroke="#777" stroke-width="1" fill="none"/>
<path d="M785.5 702.75H788.5" stroke="#111" stroke-width="1" fill="none"/>
<path d="M785.5 710H788.5" stroke="#111" stroke-width="1" fill="none"/>
<path d="M785.5 717.25H788.5" stroke="#111" stroke-width="1" fill="none"/>
<path d="M783.5 724.5H788.5" stroke="#777" stroke-width="1" fill="none"/>
<path d="M785.5 731.75H788.5" stroke="#111" stroke-width="1" fill="none"/>
<path d="M785.5 739H788.5" stroke="#111" stroke-width="1" fill="none"/>
<path d="M785.5 746.25H788.5" stroke="#111" stroke-width="1" fill="none"/>
<path d="M783.5 754.5H788.5" stroke="#777" stroke-width="1" fill="none"/>
<path d="M785.5 761.75H788.5" stroke="#111" stroke-width="1" fill="none"/>
<path d="M785.5 769H788.5" stroke="#111" stroke-width="1" fill="none"/>
<path d="M785.5 776.25H788.5" stroke="#111" stroke-width="1" fill="none"/>
<path d="M783.5 783.5H788.5" stroke="#777" stroke-width="1" fill="none"/>
<path d="M788.5 754.5H1542.5" stroke="#006400" stroke-width="1" stroke-dasharray="3 1 1 1" fill="none"/>
</svg>
<svg class="chart" style="left:0;top:0" width="1600" height="900" viewBox="0 0 1600 900">
<path d="M788.7 754.2 L800 751.8 L847.3 742.9 L851 740.6 L939.4 722 L1090.8 689.5 L1240.7 657.5 L1391.4 625.5 L1466.2 609.7" stroke="#33265f" stroke-width="1.100" fill="none" stroke-linejoin="round"/>
<text x="786.5" y="574.7" text-anchor="end" font-size="10.67" fill="#000" font-family="Liberation Sans, Noto Sans CJK SC, sans-serif" >0.0360</text>
<text x="786.5" y="603.7" text-anchor="end" font-size="10.67" fill="#000" font-family="Liberation Sans, Noto Sans CJK SC, sans-serif" >0.0300</text>
<text x="786.5" y="633.7" text-anchor="end" font-size="10.67" fill="#000" font-family="Liberation Sans, Noto Sans CJK SC, sans-serif" >0.0240</text>
<text x="786.5" y="662.7" text-anchor="end" font-size="10.67" fill="#000" font-family="Liberation Sans, Noto Sans CJK SC, sans-serif" >0.0180</text>
<text x="786.5" y="691.7" text-anchor="end" font-size="10.67" fill="#000" font-family="Liberation Sans, Noto Sans CJK SC, sans-serif" >0.0120</text>
<text x="786.5" y="720.7" text-anchor="end" font-size="10.67" fill="#000" font-family="Liberation Sans, Noto Sans CJK SC, sans-serif" >0.0060</text>
<text x="786.5" y="750.7" text-anchor="end" font-size="10.67" fill="#000" font-family="Liberation Sans, Noto Sans CJK SC, sans-serif" >0.0000</text>
<text x="786.5" y="779.7" text-anchor="end" font-size="10.67" fill="#000" font-family="Liberation Sans, Noto Sans CJK SC, sans-serif" >-0.0060</text>
<text x="790.5" y="796" text-anchor="start" font-size="10.67" fill="#000" font-family="Liberation Sans, Noto Sans CJK SC, sans-serif" >0.0</text>
<text x="941.5" y="796" text-anchor="start" font-size="10.67" fill="#000" font-family="Liberation Sans, Noto Sans CJK SC, sans-serif" >6.0</text>
<text x="1092.5" y="796" text-anchor="start" font-size="10.67" fill="#000" font-family="Liberation Sans, Noto Sans CJK SC, sans-serif" >12.0</text>
<text x="1243.5" y="796" text-anchor="start" font-size="10.67" fill="#000" font-family="Liberation Sans, Noto Sans CJK SC, sans-serif" >18.0</text>
<text x="1393.5" y="796" text-anchor="start" font-size="10.67" fill="#000" font-family="Liberation Sans, Noto Sans CJK SC, sans-serif" >24.0</text>
<text x="1544.5" y="796" text-anchor="start" font-size="10.67" fill="#000" font-family="Liberation Sans, Noto Sans CJK SC, sans-serif" >30.0</text>
<text x="769.5" y="548.2" text-anchor="start" font-size="10.67" fill="#4b004b" font-family="Liberation Sans, Noto Sans CJK SC, sans-serif" >mm/mm</text>
<text x="1559" y="813.7" text-anchor="start" font-size="10.67" fill="#000" font-family="Liberation Sans, Noto Sans CJK SC, sans-serif" >s</text>
<text x="1164.5" y="539.2" text-anchor="middle" font-size="14.67" fill="#000" font-family="Liberation Sans, Noto Serif CJK SC, serif" >试验曲线2</text>
<text x="1164.5" y="812.7" text-anchor="middle" font-size="12.3" fill="#000" font-family="Liberation Sans, Noto Serif CJK SC, serif" >时间</text>
<text x="746" y="658.7" text-anchor="middle" font-size="12" fill="#000" font-family="Liberation Sans, Noto Serif CJK SC, serif" >应</text>
<text x="746" y="670.2" text-anchor="middle" font-size="12" fill="#000" font-family="Liberation Sans, Noto Serif CJK SC, serif" >变</text>
<g transform="translate(1570 518)"><rect x="0.5" y="0.5" width="18" height="18" fill="#fff" stroke="#000" stroke-width="1.2"/><path d="M3.500 15 L8 10.500 M11.500 9.800 L15.500 12.300" stroke="#000" stroke-width="1.100" fill="none"/><rect x="7.300" y="6.800" width="5" height="4.300" fill="#000"/><path d="M6.300 9h2" stroke="#000" stroke-width="1"/></g>
</svg>
<!-- ===== STATUS BAR ===== -->
<div id="status" class="abs"></div>
<div class="t" style="left:4px;top:843px;font-size:12px;line-height:14px;color:#1a1a2a">当前用户:</div>
<div class="t" style="left:63px;top:843px;font-size:13px;line-height:14px;color:#1a1a2a;letter-spacing:0.15px">Administrator</div>
<div class="abs" style="left:150.400px;top:844px;width:1.100px;height:13.500px;background:#2b2b3b"></div>
<div class="t" style="left:161px;top:843px;font-size:12px;line-height:14px;color:#1a1a2a">当前设备:</div>
<div class="t" style="left:219px;top:843px;font-size:12px;line-height:14px;color:#1a1a2a">无</div>
<div class="abs" style="left:241.500px;top:844px;width:1.100px;height:13.500px;background:#2b2b3b"></div>
<div class="t" style="left:250px;top:843px;font-size:12px;line-height:14px;color:#1a1a2a">联机时间(s):</div>
<div class="t" style="left:324px;top:843px;font-size:12px;line-height:14px;color:#1a1a2a">-</div>
<!-- ===== TASKBAR ===== -->
<div id="taskbar" class="abs"></div>
<div class="abs" style="left:48px;top:861px;width:343px;height:39px;background:#fff"></div>
<div class="abs" style="left:540px;top:860px;width:48px;height:40px;background:#e4eff2"></div>
<div class="abs" style="left:495px;top:897.500px;width:40px;height:2.500px;background:#1479d7"></div>
<div class="abs" style="left:540px;top:897.500px;width:48px;height:2.500px;background:#1479d7"></div>
<div class="abs" style="left:593px;top:897.500px;width:40px;height:2.500px;background:#1479d7"></div>
<div class="abs" style="left:642px;top:897.500px;width:40px;height:2.500px;background:#1479d7"></div>
<div class="abs" style="left:1595px;top:860px;width:1px;height:40px;background:#7f8e94"></div>
<!-- windows logo -->
<svg style="left:16px;top:871px" width="17" height="18" viewBox="0 0 17 18">
  <path d="M0 2.600 L7 1.500 L7 8.300 L0 8.300Z M8 1.300 L16.500 0 L16.500 8.300 L8 8.300Z M0 9.300 L7 9.300 L7 16.200 L0 15.100Z M8 9.300 L16.500 9.300 L16.500 17.500 L8 16.300Z" fill="#000"/>
</svg>
<!-- search icon -->
<svg style="left:58px;top:870px" width="20" height="20" viewBox="0 0 20 20">
  <circle cx="12.700" cy="7.500" r="5" fill="none" stroke="#1a1a1a" stroke-width="1.300"/>
  <path d="M9.200 11.200 L2.200 18" stroke="#1a1a1a" stroke-width="1.400"/>
</svg>
<div class="t" style="left:88px;top:873px;font-size:14px;line-height:16px;color:#2b2b2b">在此键入进行搜索</div>
<!-- cortana -->
<svg style="left:407px;top:871px" width="18" height="18" viewBox="0 0 18 18"><circle cx="9" cy="9" r="6.300" fill="none" stroke="#0a0a0a" stroke-width="2"/></svg>
<!-- task view -->
<svg style="left:455px;top:871px" width="18" height="17" viewBox="455 871 18 17">
  <path d="M456 872.300H466.600M456 886.200H466.600M456.500 884.400V886.200M466.100 884.400V886.200M456.500 872.300V873.600M466.100 872.300V873.600" stroke="#111" stroke-width="1.100" fill="none"/>
  <rect x="457" y="874.300" width="8.600" height="8.200" fill="none" stroke="#111" stroke-width="1.300"/>
  <path d="M470.500 872V875.200M470.500 878.800V887.300" stroke="#111" stroke-width="1.200"/>
  <rect x="469" y="875.300" width="3" height="3.200" fill="#111"/>
</svg>
<!-- explorer -->
<svg style="left:503px;top:870px" width="24" height="20" viewBox="0 0 24 20">
  <path d="M1 1.500 Q1 0.500 2 0.500 L9 0.500 L11 3 L22 3 Q23 3 23 4 L23 6 L1 6Z" fill="#f3b619"/>
  <path d="M1 5 L23 5 L23 18 Q23 19 22 19 L2 19 Q1 19 1 18Z" fill="#fcd354"/>
  <path d="M5.500 19 L5.500 11.500 Q5.500 10.500 6.500 10.500 L17.500 10.500 Q18.500 10.500 18.500 11.500 L18.500 19 L15 19 L15 14 L9 14 L9 19Z" fill="#3f97e8"/>
  <rect x="5.500" y="10.500" width="13" height="2.500" fill="#2a7fd6"/>
</svg>
<!-- testmaster -->
<svg style="left:550px;top:865px" width="28" height="28" viewBox="550 865 28 28">
  <defs><linearGradient id="lg2" x1="0.300" y1="0" x2="0.700" y2="1"><stop offset="0" stop-color="#c6189f"/><stop offset="0.500" stop-color="#8e40c4"/><stop offset="1" stop-color="#3488da"/></linearGradient></defs>
  <path d="M561 868 L571 868 L563.300 884.500 L575 884.500 L571.300 891 L556 891 L552.800 886.300 Z" fill="url(#lg2)"/>
  <path d="M569.600 868.200 L571 868.200 L562.400 886.600 L561 886 Z" fill="#f3e6f7" opacity=".9"/>
  <path d="M552.800 886.300 L556 891 L558 887.800 L555 884Z" fill="#7a2fb0" opacity=".35"/>
</svg>
<!-- calculator -->
<svg style="left:603px;top:867px" width="20" height="26" viewBox="603 867 20 26">
  <rect x="604.100" y="867.900" width="17.800" height="23.900" fill="#3b3d3e"/>
  <rect x="606.200" y="870.100" width="13.700" height="3.600" fill="#d5e6eb" stroke="#ffffff" stroke-width=".5"/>
  <g fill="#f4f8f9">
    <path d="M606 876h3.100l-3.100 3.100zM611 876h3.100l-3.100 3.100zM616.100 876h3.100l-3.100 3.100z"/>
    <path d="M606 881.100h3.100l-3.100 3.100zM611 881.100h3.100l-3.100 3.100zM616.100 881.100h3.100l-3.100 3.100z"/>
    <path d="M606 886.200h3.100l-3.100 3.100zM611 886.200h3.100l-3.100 3.100zM616.100 886.200h3.100l-3.100 3.100z"/>
  </g>
</svg>
<!-- word -->
<svg style="left:648px;top:866px" width="28" height="27" viewBox="648 866 28 27">
  <defs><linearGradient id="wdg" x1="0" y1="0" x2="1" y2="0"><stop offset="0" stop-color="#2a55b5"/><stop offset="0.600" stop-color="#6f92d8"/><stop offset="1" stop-color="#dfe8f8"/></linearGradient></defs>
  <path d="M650.300 873 Q651 868.500 656.500 868.200 L670.200 868 L670.200 872 L657.500 872 L656 887.500 L650.300 887Z" fill="url(#wdg)" opacity=".95"/>
  <path d="M656.500 868.200 L670.200 868" stroke="#9fb6e6" stroke-width="1" fill="none"/>
  <path d="M657.700 871.300 L673.300 872.100 L671.800 890.200 L655.500 888.200Z" fill="#fbfcff" stroke="#d3dcee" stroke-width=".7"/>
  <text x="658.300" y="879.600" font-family="Liberation Sans,sans-serif" font-weight="bold" font-style="italic" font-size="8.200" fill="#1f3f9f">W</text>
  <path d="M666.300 874.600h4M666.300 876.900h4M666.300 879.100h4" stroke="#2a4fb0" stroke-width="1.100"/>
  <path d="M658.300 882.100 L670.300 882.800 M658.200 884.100 L670.200 884.800 M658.100 886 L670 886.700" stroke="#2446a8" stroke-width="1.100"/>
</svg>
<!-- tray -->
<svg style="left:1380px;top:862px" width="100" height="36" viewBox="1380 862 100 36">
  <path d="M1386.300 882.500 L1392 876.800 L1397.700 882.500" stroke="#111" stroke-width="1.300" fill="none"/>
  <g stroke="#111" stroke-width="1.150" fill="none">
    <circle cx="1415.900" cy="879.800" r="7.500"/>
    <ellipse cx="1415.900" cy="879.800" rx="3.600" ry="7.500"/>
    <path d="M1415.900 872.300V887.300M1409.200 876.400H1422.600M1409.200 882.700H1418"/>
  </g>
  <circle cx="1420.600" cy="884.800" r="3.700" fill="#cfe1e7"/>
  <circle cx="1420.600" cy="884.800" r="2.900" fill="none" stroke="#111" stroke-width="1.150"/>
  <path d="M1418.600 882.800 L1422.600 886.800" stroke="#111" stroke-width="1.150"/>
  <path d="M1432.700 877.600 H1434.400 L1437.600 874.400 V885.600 L1434.400 882.500 H1432.700 Z" fill="none" stroke="#111" stroke-width="1.150" stroke-linejoin="miter"/>
  <circle cx="1443.800" cy="883.600" r="4.300" fill="#e3202c"/>
  <path d="M1441.800 881.600 L1445.800 885.600 M1445.800 881.600 L1441.800 885.600" stroke="#fff" stroke-width="1.150"/>
</svg>
<div class="t" style="left:1454px;top:871px;font-size:16px;line-height:18px;color:#000">英</div>
<div class="t" style="left:1495.500px;top:864px;font-size:12.300px;line-height:14px;color:#111;letter-spacing:0.1px">10:36</div>
<div class="t" style="left:1484.500px;top:883px;font-size:12.300px;line-height:14px;color:#111;letter-spacing:0.45px">2020/4/8</div>
<svg style="left:1558px;top:871px" width="26" height="26" viewBox="0 0 26 26">
  <path d="M1 1h16v11.500H6.500L3.500 15.500v-3H1z" fill="#000"/>
  <path d="M4 4.200h10M4 6.800h10M4 9.400h10" stroke="#cfe1e7" stroke-width="1"/>
  <circle cx="16.300" cy="16" r="7.500" fill="#d5d5d5" stroke="#8a8a8a" stroke-width="1"/>
  <text x="16.300" y="20" text-anchor="middle" font-family="Liberation Sans,sans-serif" font-weight="bold" font-size="11" fill="#222">3</text>
</svg>
</body>
</html>
